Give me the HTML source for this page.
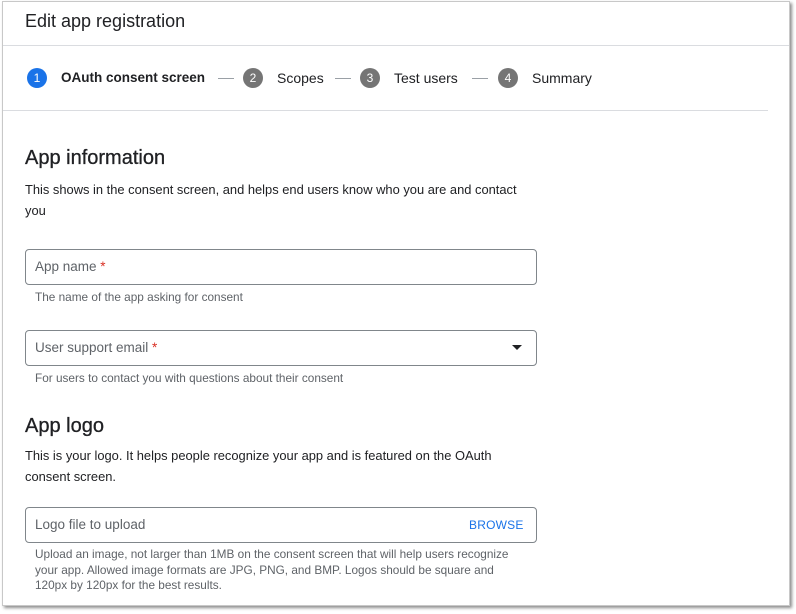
<!DOCTYPE html>
<html><head><style>
body{margin:0;width:796px;height:614px;background:#fff;font-family:"Liberation Sans",Arial,sans-serif;position:relative;overflow:hidden;color:#202124}
.frame{position:absolute;left:2px;top:1px;width:786px;height:603px;border:1px solid #c8c8c8;box-shadow:2px 2px 3px rgba(0,0,0,.45);background:#fff}
.a{position:absolute;white-space:nowrap}
.hl{position:absolute;height:1px;background:#dadce0}
.c{position:absolute;width:20px;height:20px;border-radius:50%;background:#757575;color:#fff;font-size:12px;text-align:center;line-height:20px}
.dash{position:absolute;width:16px;height:1px;background:#9aa0a6;top:78px}
.box{position:absolute;left:25px;width:510px;height:34px;border:1px solid #80868b;border-radius:4px}
.lbl{font-size:13.5px;color:#5f6368}
.help{font-size:11.8px;color:#5f6368}
.p{font-size:12.9px;color:#202124;line-height:21px}
.r{color:#d93025}
.h{font-size:20px;-webkit-text-stroke:0.3px #202124}
.st{font-size:14px;top:70px}
</style></head><body>
<div class="frame"></div>
<div class="a" style="left:25px;top:11px;font-size:18px">Edit app registration</div>
<div class="hl" style="left:3px;top:45px;width:786px"></div>
<div class="c" style="left:27px;top:68px;background:#1a73e8">1</div>
<div class="a st" style="left:61px;font-weight:bold;font-size:13.5px">OAuth consent screen</div>
<div class="dash" style="left:218px"></div>
<div class="c" style="left:243px;top:68px">2</div>
<div class="a st" style="left:277px">Scopes</div>
<div class="dash" style="left:335px"></div>
<div class="c" style="left:360px;top:68px">3</div>
<div class="a st" style="left:394px">Test users</div>
<div class="dash" style="left:472px"></div>
<div class="c" style="left:498px;top:68px">4</div>
<div class="a st" style="left:532px">Summary</div>
<div class="hl" style="left:3px;top:110px;width:765px"></div>
<div class="a h" style="left:25px;top:147px">App information</div>
<div class="a p" style="left:25px;top:179px">This shows in the consent screen, and helps end users know who you are and contact<br>you</div>
<div class="box" style="top:249px"></div>
<div class="a lbl" style="left:35px;top:259px">App name <span class="r">*</span></div>
<div class="a help" style="left:35px;top:290px">The name of the app asking for consent</div>
<div class="box" style="top:330px"></div>
<div class="a lbl" style="left:35px;top:340px">User support email <span class="r">*</span></div>
<div class="a" style="left:512px;top:345px;width:0;height:0;border-left:5px solid transparent;border-right:5px solid transparent;border-top:5px solid #202124"></div>
<div class="a help" style="left:35px;top:371px">For users to contact you with questions about their consent</div>
<div class="a h" style="left:25px;top:415px">App logo</div>
<div class="a p" style="left:25px;top:445px">This is your logo. It helps people recognize your app and is featured on the OAuth<br>consent screen.</div>
<div class="box" style="top:507px"></div>
<div class="a lbl" style="left:35px;top:517px">Logo file to upload</div>
<div class="a" style="left:469px;top:518px;font-size:12px;color:#1a73e8;letter-spacing:.2px">BROWSE</div>
<div class="a help" style="left:35px;top:547px;line-height:15.5px">Upload an image, not larger than 1MB on the consent screen that will help users recognize<br>your app. Allowed image formats are JPG, PNG, and BMP. Logos should be square and<br>120px by 120px for the best results.</div>
</body></html>
